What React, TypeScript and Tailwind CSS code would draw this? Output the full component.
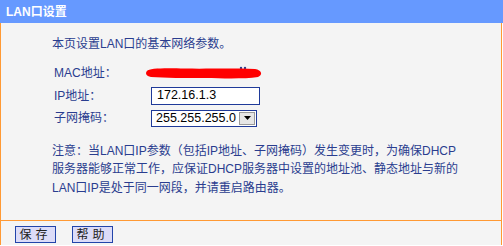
import React from "react";

const font = { fontFamily: '"Liberation Sans", "Noto Sans CJK SC", sans-serif' };

function Redaction() {
  return (
    <svg width="118" height="14" viewBox="0 0 118 14" className="-ml-[6px] block">
      <circle cx="96" cy="2" r="1.2" fill="#2a3d8f" />
      <circle cx="100" cy="2" r="1.2" fill="#2a3d8f" />
      <path
        d="M2 5 C4 2 20 2 40 2.5 C60 3 85 2 110 3 C117 4 118 9 113 11 C100 13 80 12.5 60 12 C40 12 20 12 6 11 C1 10 0 7 2 5 Z"
        fill="#ff0000"
      />
    </svg>
  );
}

function Row({ label, children }: { label: string; children: React.ReactNode }) {
  return (
    <div className="flex h-[22.5px] items-center">
      <span className="w-[97px] text-[12px] text-[#2a3d8f]">{label}</span>
      {children}
    </div>
  );
}

export default function App() {
  return (
    <div className="h-[246px] w-[503px] overflow-hidden bg-white" style={font}>
      <div className="flex h-[23px] items-center bg-[#6699ff] pl-[6px] text-[12px] font-bold text-white">
        LAN口设置
      </div>
      <div className="w-[502px] border-x border-[#ff9933] bg-[#f4f4f4]">
        <div className="flex h-[198px] flex-col border-b border-[#ff9933] pl-[51px] pt-[12px] text-[12px] text-[#2a3d8f]">
          <p className="leading-[18px]">本页设置LAN口的基本网络参数。</p>
          <div className="mt-[9px] flex flex-col pl-[2px]">
            <Row label="MAC地址：">
              <Redaction />
            </Row>
            <Row label="IP地址：">
              <div className="flex h-[18px] w-[109px] items-center border border-[#1f3a99] bg-white pl-[5px] text-[12.5px] text-black">
                172.16.1.3
              </div>
            </Row>
            <Row label="子网掩码：">
              <div className="flex h-[17px] w-[106px] items-center justify-between border border-[#1f3a99] bg-white pl-[4px] text-[12.5px] text-black">
                <span className="leading-none">255.255.255.0</span>
                <span className="mr-[1px] flex h-[13px] w-[16px] items-center justify-center border border-[#9a9a9a] bg-[#e6e6e6]">
                  <svg width="7" height="4" viewBox="0 0 7 4">
                    <path d="M0 0 H7 L3.5 4 Z" fill="#000" />
                  </svg>
                </span>
              </div>
            </Row>
          </div>
          <p className="mt-[12px] whitespace-nowrap leading-[18.5px]">
            注意：当LAN口IP参数（包括IP地址、子网掩码）发生变更时，为确保DHCP
            <br />
            服务器能够正常工作，应保证DHCP服务器中设置的地址池、静态地址与新的
            <br />
            LAN口IP是处于同一网段，并请重启路由器。
          </p>
        </div>
        <div className="flex h-[24px] items-center gap-[16px] pl-[14px] pt-[3px]">
          <button className="h-[17px] w-[41px] border border-[#2244aa] bg-[#dcdcf8] text-[12px] leading-none tracking-[4px] text-[#222]">
            保存
          </button>
          <button className="h-[17px] w-[41px] border border-[#2244aa] bg-[#dcdcf8] text-[12px] leading-none tracking-[4px] text-[#222]">
            帮助
          </button>
        </div>
      </div>
    </div>
  );
}
